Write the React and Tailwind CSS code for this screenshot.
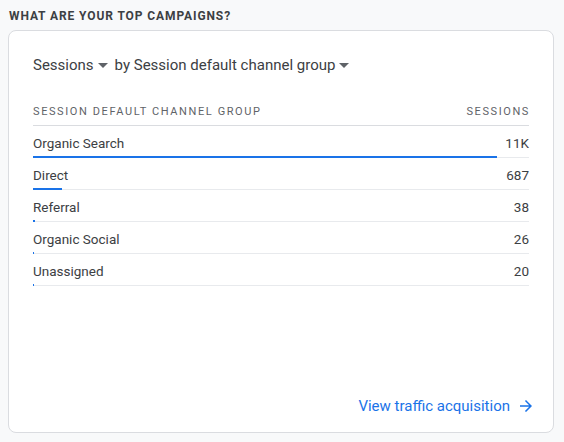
import React from 'react';

const rows = [
  { name: 'Organic Search', value: '11K', bar: 464 },
  { name: 'Direct', value: '687', bar: 29 },
  { name: 'Referral', value: '38', bar: 2 },
  { name: 'Organic Social', value: '26', bar: 1 },
  { name: 'Unassigned', value: '20', bar: 1 },
];

const Caret = () => (
  <svg width="10" height="5" viewBox="0 0 10 5" className="ml-[4px] mt-[1px]">
    <path d="M0 0L5 5L10 0Z" fill="#5f6368" />
  </svg>
);

export default function App() {
  return (
    <div className="w-[564px] h-[442px] bg-[#f8f9fa] pt-[9px] px-[8px] font-['Roboto',sans-serif]">
      <h2 className="pl-[1px] text-[12px] leading-[14px] font-bold tracking-[0.9px] text-[#3c4043]">
        WHAT ARE YOUR TOP CAMPAIGNS?
      </h2>
      <div className="mt-[7px] w-[546px] h-[403px] bg-white border border-[#dadce0] rounded-[8px] px-[24px] pt-[24px] pb-[15px] flex flex-col">
        <div className="flex items-center text-[15px] leading-[20px] text-[#3c4043]">
          <span>Sessions</span>
          <Caret />
          <span className="ml-[7px]">by Session default channel group</span>
          <Caret />
        </div>

        <div className="mt-[30px]">
          <div className="flex justify-between items-end pb-[6px] border-b border-[#dadce0] text-[11px] leading-[14px] tracking-[1.6px] text-[#5f6368]">
            <span>SESSION DEFAULT CHANNEL GROUP</span>
            <span className="-mr-[1px]">SESSIONS</span>
          </div>
          {rows.map((r) => (
            <div key={r.name} className="relative flex justify-between items-center h-[32px] border-b border-[#e8eaed] text-[13.5px] text-[#3c4043] pt-[3px]">
              <span>{r.name}</span>
              <span>{r.value}</span>
              <div className="absolute left-0 bottom-[-1px] h-[2px] bg-[#1a73e8]" style={{ width: r.bar }} />
            </div>
          ))}
        </div>

        <div className="mt-auto flex justify-end items-center text-[15px] text-[#1a73e8] -mr-[6px]">
          <span>View traffic acquisition</span>
          <svg width="18" height="18" viewBox="0 0 24 24" className="ml-[7px]">
            <path d="M12 4l-1.41 1.41L16.17 11H4v2h12.17l-5.58 5.59L12 20l8-8z" fill="#1a73e8" />
          </svg>
        </div>
      </div>
    </div>
  );
}
